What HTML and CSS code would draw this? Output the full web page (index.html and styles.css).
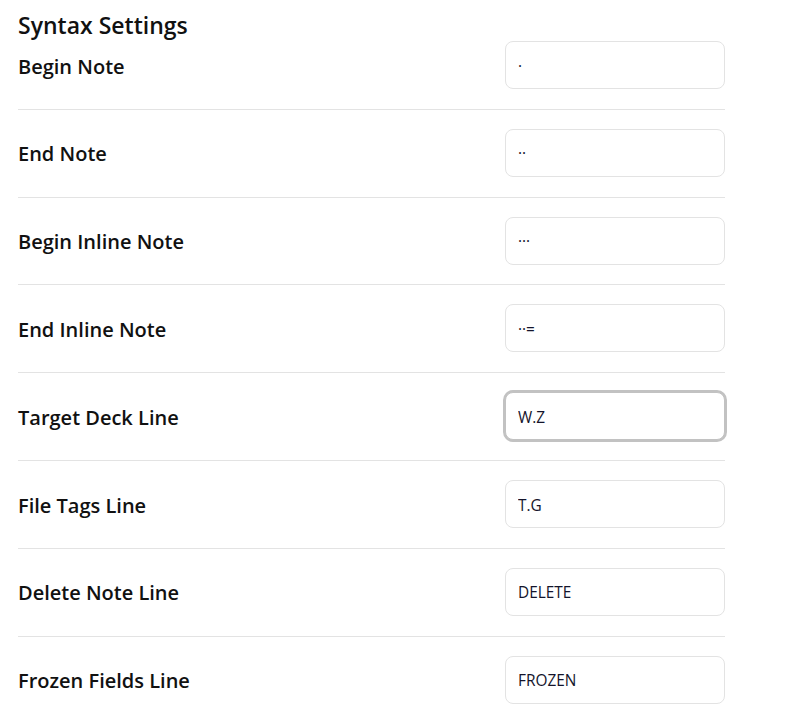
FILE: index.html
```html
<!DOCTYPE html>
<html lang="en">
<head>
<meta charset="utf-8">
<title>Syntax Settings</title>
<link rel="stylesheet" href="styles.css">
</head>
<body>
<div class="settings">
  <h3 class="title">Syntax Settings</h3>
  <div class="row first">
    <div class="label">Begin Note</div>
    <input class="field" type="text" value="·">
  </div>
  <div class="row">
    <div class="label">End Note</div>
    <input class="field" type="text" value="··">
  </div>
  <div class="row">
    <div class="label">Begin Inline Note</div>
    <input class="field" type="text" value="···">
  </div>
  <div class="row">
    <div class="label">End Inline Note</div>
    <input class="field" type="text" value="··=">
  </div>
  <div class="row">
    <div class="label">Target Deck Line</div>
    <input class="field focused" type="text" value="W.Z" autofocus>
  </div>
  <div class="row">
    <div class="label">File Tags Line</div>
    <input class="field" type="text" value="T.G">
  </div>
  <div class="row">
    <div class="label">Delete Note Line</div>
    <input class="field" type="text" value="DELETE">
  </div>
  <div class="row last">
    <div class="label">Frozen Fields Line</div>
    <input class="field" type="text" value="FROZEN">
  </div>
</div>
</body>
</html>
```
FILE: styles.css
```css
html, body {
  margin: 0;
  padding: 0;
  background: #ffffff;
}

body {
  font-family: "Open Sans", "Noto Sans", sans-serif;
  color: #111111;
}

.settings {
  width: 707px;
  margin-left: 18px;
  padding-top: 10px;
}

.title {
  margin: 0;
  height: 31px;
  font-size: 23px;
  line-height: 31px;
  font-weight: 600;
  color: #111111;
}

.row {
  display: flex;
  align-items: center;
  justify-content: space-between;
  padding: 19px 0 19.84px;
  border-bottom: 1px solid #e3e3e3;
}

.row.first {
  padding-top: 0;
}

.row.last {
  border-bottom: none;
}

.label {
  font-size: 20px;
  font-weight: 600;
  color: #111111;
  padding-top: 2px;
}

.field {
  box-sizing: border-box;
  width: 220px;
  height: 48px;
  margin: 0;
  padding: 2px 12px 0;
  border: 1px solid #e3e3e3;
  border-radius: 8px;
  background: #ffffff;
  font-family: "Open Sans", "Noto Sans", sans-serif;
  font-size: 15.4px;
  color: #14142b;
  outline: none;
  caret-color: #000000;
}

.field.focused,
.field:focus {
  border-color: #c2c2c2;
  box-shadow: 0 0 0 2px #c2c2c2;
}
```
